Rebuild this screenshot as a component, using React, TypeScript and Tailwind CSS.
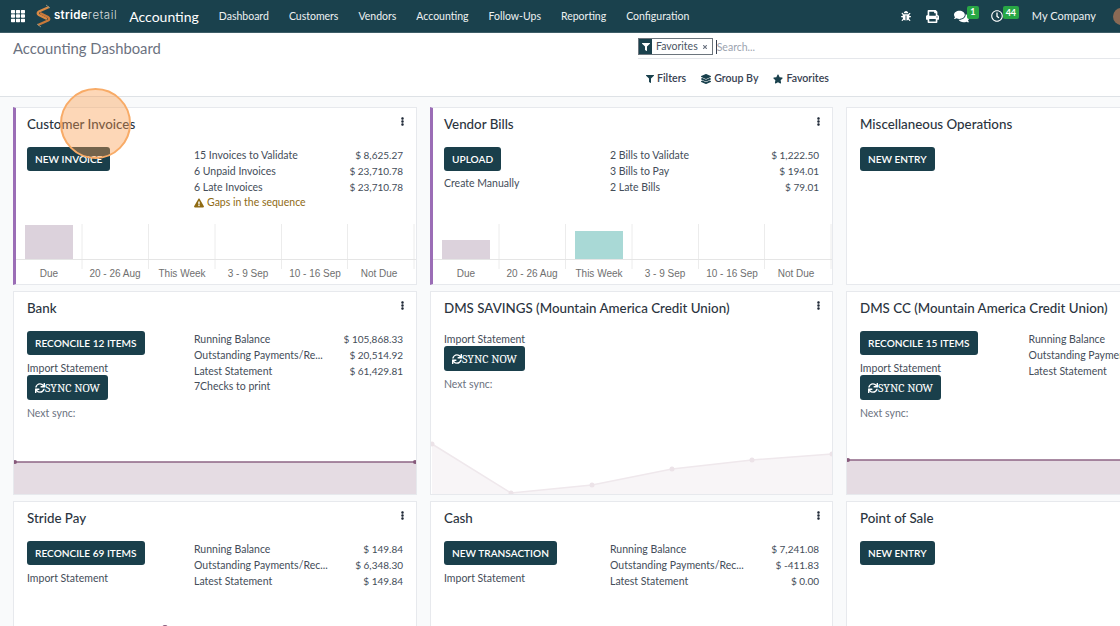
import React from "react";
import {
  FaBug, FaPrint, FaComments, FaRegClock, FaFilter, FaLayerGroup, FaStar, FaSync,
  FaEllipsisV, FaExclamationTriangle, FaTh, FaTimes,
} from "react-icons/fa";

const NAV = ["Dashboard", "Customers", "Vendors", "Accounting", "Follow-Ups", "Reporting", "Configuration"];

function Logo() {
  return (
    <svg width="17" height="24" viewBox="0 0 17 24" fill="none">
      <path d="M14 3 L4 7.5 Q1.5 9 4 11 L12 15" stroke="#d98a45" strokeWidth="2.4" />
      <path d="M3 21 L13 16.5 Q15.5 15 13 13 L5 9" stroke="#c9793a" strokeWidth="2.4" />
      <path d="M11 1 L15 4 M2 20 L6 23" stroke="#8a8f80" strokeWidth="1" />
    </svg>
  );
}

function TopBar() {
  return (
    <header className="flex h-[33px] shrink-0 items-center border-b border-[#3d5d67] bg-[#1a414d] text-white">
      <FaTh className="ml-[11px] h-[14px] w-[14px] text-white" />
      <div className="ml-[10px] flex items-center">
        <Logo />
        <span className="ml-[2px] font-[Inter,sans-serif] text-[11.5px] font-semibold tracking-[0.3px] text-white">stride</span>
        <span className="font-[Inter,sans-serif] text-[11.5px] font-light tracking-[0.6px] text-[#d5dcde]">retail</span>
      </div>
      <span className="ml-[12px] text-[14px] text-white">Accounting</span>
      <nav className="ml-[20px] flex gap-[20px] pt-[1px] text-[10.5px] text-[#eef1f2]">
        {NAV.map((n) => (
          <span key={n}>{n}</span>
        ))}
      </nav>
      <div className="ml-auto flex items-center">
        <FaBug className="h-[10px] w-[10px]" />
        <FaPrint className="ml-[15px] h-[13px] w-[13px]" />
        <div className="relative ml-[15px] w-[15px]">
          <FaComments className="h-[15px] w-[15px]" />
          <span className="absolute left-[13px] top-[-3px] flex h-[13px] w-[12px] items-center justify-center rounded-[2px] bg-[#28a745] text-[9px] font-bold">1</span>
        </div>
        <div className="relative ml-[22px] w-[12px]">
          <FaRegClock className="h-[12px] w-[12px]" />
          <span className="absolute left-[12px] top-[-4px] flex h-[13px] w-[16px] items-center justify-center rounded-[2px] bg-[#28a745] text-[9px] font-bold">44</span>
        </div>
        <span className="ml-[29px] pt-[1px] text-[11px] text-[#eef1f2]">My Company</span>
        <span className="ml-[17px] mr-[-10px] h-[17px] w-[17px] shrink-0 rounded-full bg-[#8a6a55]" />
      </div>
    </header>
  );
}

function ControlPanel() {
  return (
    <section className="flex h-[64px] shrink-0 border-b border-[#dee2e6] bg-white">
      <div className="w-[625px] pl-[13px] pt-[5px] text-[14.8px] leading-[20px] text-[#6b7280]">Accounting Dashboard</div>
      <div className="flex flex-1 flex-col">
        <div className="ml-[13px] flex h-[26px] items-center border-b border-[#e5e7eb] pt-[2px]">
          <div className="flex h-[17px] items-stretch border border-[#6c757d]">
            <span className="flex w-[13px] items-center justify-center bg-[#1a414d] text-white">
              <FaFilter className="h-[8px] w-[8px]" />
            </span>
            <span className="ml-[4px] text-[10.5px] leading-[15px] text-[#4b5563]">Favorites</span>
            <span className="ml-[4px] mr-[4px] flex items-center text-[#6b7280]">
              <FaTimes className="h-[6px] w-[6px]" />
            </span>
          </div>
          <span className="ml-[3px] border-l border-[#374151] text-[10.5px] leading-[14px] text-[#9ca3af]">Search...</span>
        </div>
        <div className="ml-[21px] mt-[12px] flex items-center text-[10.6px] font-semibold text-[#374151]">
          <FaFilter className="h-[8px] w-[8px] text-[#1a414d]" />
          <span className="ml-[3px]">Filters</span>
          <FaLayerGroup className="ml-[15px] h-[10px] w-[10px] text-[#1a414d]" />
          <span className="ml-[3px]">Group By</span>
          <FaStar className="ml-[15px] h-[10px] w-[10px] text-[#1a414d]" />
          <span className="ml-[3px]">Favorites</span>
        </div>
      </div>
    </section>
  );
}

function Btn({ children }: { children: React.ReactNode }) {
  return (
    <div className="flex h-[24px] w-fit items-center whitespace-nowrap rounded-[3px] bg-[#1a3f4b] px-[8px] pt-[1px] text-[10.1px] font-semibold uppercase text-white">
      {children}
    </div>
  );
}

function SyncBtn() {
  return (
    <div className="flex h-[25px] w-fit items-center whitespace-nowrap rounded-[3px] bg-[#1a3f4b] px-[8px] font-serif text-[12px] text-white">
      <FaSync className="h-[10px] w-[10px]" />
      SYNC NOW
    </div>
  );
}

function Stats({ rows, warn, extra }: { rows: [string, string][]; warn?: string; extra?: string }) {
  return (
    <div className="ml-auto w-[209px] pt-[1px] text-[10.5px] leading-[15.8px] text-[#444d59]">
      {rows.map(([a, b]) => (
        <div key={a} className="flex justify-between">
          <span>{a}</span>
          <span className="text-[10px]">{b}</span>
        </div>
      ))}
      {extra && <div>{extra}</div>}
      {warn && (
        <div className="flex items-center gap-[3px] text-[#8f6b14]">
          <FaExclamationTriangle className="h-[10px] w-[10px]" />
          {warn}
        </div>
      )}
    </div>
  );
}

const LABELS: [string, number][] = [["Due", 33], ["20 - 26 Aug", 99], ["This Week", 166], ["3 - 9 Sep", 232], ["10 - 16 Sep", 299], ["Not Due", 363]];

function BarChart({ bars }: { bars: { x: number; h: number; c: string }[] }) {
  const xs = [66, 132.5, 199, 265.5, 331.5, 398];
  return (
    <svg className="mt-auto block shrink-0" width="400" height="63" viewBox="0 0 400 63">
      {xs.map((x) => (
        <line key={x} x1={x} x2={x} y1="3" y2="48" stroke="#ececec" />
      ))}
      <line x1="0" x2="400" y1="38.5" y2="38.5" stroke="#e5e5e5" />
      {bars.map((b) => (
        <rect key={b.x} x={b.x} y={38 - b.h} width="48" height={b.h} fill={b.c} />
      ))}
      {LABELS.map(([l, x]) => (
        <text key={l} x={x} y="56" textAnchor="middle" fontFamily="'Liberation Sans', sans-serif" fontSize="10" fill="#6f6f6f">
          {l}
        </text>
      ))}
    </svg>
  );
}

function LineFlat({ tall }: { tall?: boolean }) {
  const H = tall ? 37 : 35;
  return (
    <svg className="mt-auto block shrink-0" width="404" height={H} viewBox={`0 0 404 ${H}`}>
      <rect x="0" y="3" width="404" height={H - 3} fill="#e5dce3" />
      <line x1="0" x2="404" y1="3" y2="3" stroke="#8d6585" strokeWidth="1.5" />
      <circle cx="1" cy="3" r="2" fill="#875a7b" />
      <circle cx="401" cy="3" r="2" fill="#875a7b" />
    </svg>
  );
}

function LineSavings() {
  const pts: [number, number][] = [[1, 11], [80, 60], [161, 52], [241, 36], [321, 27], [401, 21]];
  const p = pts.map((q) => q.join(",")).join(" ");
  return (
    <svg className="mt-auto block shrink-0" width="402" height="61" viewBox="0 0 402 61">
      <polygon points={`1,61 ${p} 401,61`} fill="#f8f5f7" />
      <polyline points={p} fill="none" stroke="#efe8ec" strokeWidth="1.5" />
      {pts.map(([x, y]) => (
        <circle key={x} cx={x} cy={y} r="2.5" fill="#ece3e8" />
      ))}
    </svg>
  );
}

function Card({
  title, menu = true, stripe, h, children, chart,
}: {
  title: string; menu?: boolean; stripe?: boolean; h: string; children: React.ReactNode; chart?: React.ReactNode;
}) {
  return (
    <div className={`flex flex-col overflow-hidden border border-[#e7e9ed] bg-white ${h} ${stripe ? "border-l-[3px] border-l-[#9b6db6]" : ""}`}>
      <div className={`flex items-start justify-between pr-[9px] pt-[6px] ${stripe ? "pl-[11px]" : "pl-[13px]"}`}>
        <span className="text-[13.35px] font-medium leading-[20px] text-[#2b3440]">{title}</span>
        {menu && <FaEllipsisV className="mt-[3px] h-[9px] w-[9px] text-[#1f2937]" />}
      </div>
      <div className={`flex pr-[13px] pt-[13px] ${stripe ? "pl-[11px]" : "pl-[13px]"}`}>{children}</div>
      {chart}
    </div>
  );
}

function Left({ children }: { children: React.ReactNode }) {
  return <div className="flex flex-col items-start text-[10.5px] text-[#444d59]">{children}</div>;
}

const H1 = "h-[178px]";
const H2 = "h-[204px]";
const H3 = "h-[204px]";

export default function App() {
  return (
    <div className="flex h-[626px] w-[1120px] flex-col overflow-hidden bg-[#f9fafb] font-[Lato,sans-serif]">
      <TopBar />
      <ControlPanel />
      <main className="grid w-[1240px] grid-cols-[404px_403px_404px] gap-x-[13px] gap-y-[6px] pl-[13px] pt-[10px]">
        <Card title="Customer Invoices" stripe h={H1} chart={<BarChart bars={[{ x: 9, h: 34, c: "#dcd2dc" }]} />}>
          <Left><Btn>New Invoice</Btn></Left>
          <div className="ml-auto">
            <Stats
              rows={[["15 Invoices to Validate", "$ 8,625.27"], ["6 Unpaid Invoices", "$ 23,710.78"], ["6 Late Invoices", "$ 23,710.78"]]}
              warn="Gaps in the sequence"
            />
          </div>
        </Card>
        <Card
          title="Vendor Bills"
          stripe
          h={H1}
          chart={<BarChart bars={[{ x: 9, h: 19, c: "#dcd2dc" }, { x: 142, h: 28, c: "#a9d9d6" }]} />}
        >
          <Left>
            <Btn>Upload</Btn>
            <span className="mt-[5px]">Create Manually</span>
          </Left>
          <div className="ml-auto">
            <Stats rows={[["2 Bills to Validate", "$ 1,222.50"], ["3 Bills to Pay", "$ 194.01"], ["2 Late Bills", "$ 79.01"]]} />
          </div>
        </Card>
        <Card title="Miscellaneous Operations" menu={false} h={H1}>
          <Left><Btn>New Entry</Btn></Left>
        </Card>

        <Card title="Bank" h={H2} chart={<LineFlat />}>
          <Left>
            <Btn>Reconcile 12 Items</Btn>
            <span className="mt-[6px] leading-[14px]">Import Statement</span>
            <SyncBtn />
            <span className="mt-[6px] text-[#6b7280]">Next sync:</span>
          </Left>
          <div className="ml-auto">
            <Stats
              rows={[["Running Balance", "$ 105,868.33"], ["Outstanding Payments/Re...", "$ 20,514.92"], ["Latest Statement", "$ 61,429.81"]]}
              extra="7Checks to print"
            />
          </div>
        </Card>
        <Card title="DMS SAVINGS (Mountain America Credit Union)" h={H2} chart={<LineSavings />}>
          <Left>
            <span className="pt-[1px] leading-[14px]">Import Statement</span>
            <SyncBtn />
            <span className="mt-[6px] text-[#6b7280]">Next sync:</span>
          </Left>
        </Card>
        <Card title="DMS CC (Mountain America Credit Union)" menu={false} h={H2} chart={<LineFlat tall />}>
          <Left>
            <Btn>Reconcile 15 Items</Btn>
            <span className="mt-[6px] leading-[14px]">Import Statement</span>
            <SyncBtn />
            <span className="mt-[6px] text-[#6b7280]">Next sync:</span>
          </Left>
          <div className="ml-[51px] w-[209px] pt-[1px] text-[10.5px] leading-[15.8px] text-[#444d59]">
            <div>Running Balance</div>
            <div>Outstanding Payments/Re...</div>
            <div>Latest Statement</div>
          </div>
        </Card>

        <Card
          title="Stride Pay"
          h={H3}
          chart={
            <svg className="mt-auto block shrink-0" width="402" height="80" viewBox="0 0 402 80">
              <circle cx="151" cy="4" r="3" fill="#875a7b" />
            </svg>
          }
        >
          <Left>
            <Btn>Reconcile 69 Items</Btn>
            <span className="mt-[6px]">Import Statement</span>
          </Left>
          <div className="ml-auto">
            <Stats rows={[["Running Balance", "$ 149.84"], ["Outstanding Payments/Rec...", "$ 6,348.30"], ["Latest Statement", "$ 149.84"]]} />
          </div>
        </Card>
        <Card title="Cash" h={H3}>
          <Left>
            <Btn>New Transaction</Btn>
            <span className="mt-[6px]">Import Statement</span>
          </Left>
          <div className="ml-auto">
            <Stats rows={[["Running Balance", "$ 7,241.08"], ["Outstanding Payments/Rec...", "$ -411.83"], ["Latest Statement", "$ 0.00"]]} />
          </div>
        </Card>
        <Card title="Point of Sale" menu={false} h={H3}>
          <Left><Btn>New Entry</Btn></Left>
        </Card>
      </main>
      <div className="pointer-events-none fixed left-[60px] top-[88px] h-[71px] w-[71px] rounded-full border-[2.5px] border-[#f8ab67] bg-[#f99a4c]/40" />
    </div>
  );
}
